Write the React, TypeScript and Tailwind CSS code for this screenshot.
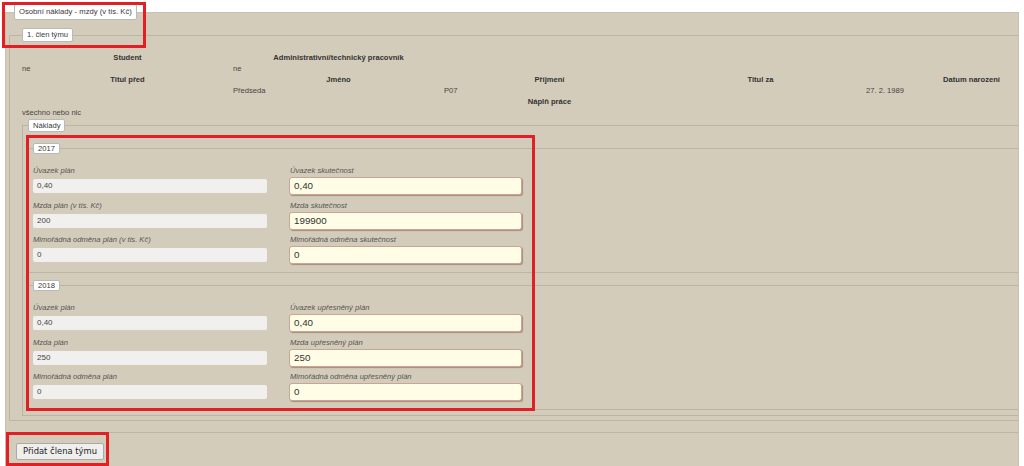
import React from "react";

const SANS = "font-['Liberation_Sans',Arial,sans-serif]";

function Lg({ children, cls = "" }: { children: React.ReactNode; cls?: string }) {
  return (
    <legend
      className={`bg-white border border-[#b9b9b9] rounded-[2px] px-[4px] text-[color:#3a3a3a] ${cls}`}
    >
      {children}
    </legend>
  );
}

type Field = { label: string; value: string };

function LeftInput({ f }: { f: Field }) {
  return (
    <div className="flex flex-col">
      <div className="h-[11px] leading-[10px] text-[7.6px] italic text-[#555]">{f.label}</div>
      <div className="h-[18px] flex items-center">
        <div className="h-[14px] w-full bg-[#f1f0ee] rounded-[2px] pl-[4px] text-[8px] leading-[14px] text-[#444]">
          {f.value}
        </div>
      </div>
    </div>
  );
}

function RightInput({ f }: { f: Field }) {
  return (
    <div className="flex flex-col">
      <div className="h-[11px] leading-[10px] text-[7.6px] italic text-[#555] pl-[1px]">{f.label}</div>
      <div className="h-[18px] w-full bg-[#fffde6] border border-[#c9a497] rounded-[3px] shadow-[1px_1px_1px_rgba(120,60,40,0.45)] pl-[4px] text-[9.8px] leading-[16px] text-[#333]">
        {f.value}
      </div>
    </div>
  );
}

function Year({ year, left, right, cls = "" }: { year: string; left: Field[]; right: Field[]; cls?: string }) {
  return (
    <fieldset className={`min-w-0 border border-r-0 border-[#bdb5a4] pl-[4px] pt-[12px] pb-[8px] ${cls}`}>
      <Lg cls="text-[7.6px] leading-[9px] px-[4px]">{year}</Lg>
      <div className="grid grid-cols-[234px_233px] gap-x-[22px]">
        <div className="flex flex-col gap-y-[5.5px]">
          {left.map((f, i) => (
            <LeftInput key={i} f={f} />
          ))}
        </div>
        <div className="flex flex-col gap-y-[5.5px]">
          {right.map((f, i) => (
            <RightInput key={i} f={f} />
          ))}
        </div>
      </div>
    </fieldset>
  );
}

export default function App() {
  const H = "font-bold text-center text-[#333]";
  const V = "text-[#444]";
  return (
    <div className={`relative w-[1024px] h-[466px] overflow-hidden bg-white ${SANS} text-[7.6px]`}>
      <div className="pl-[5px] pr-[5px] pt-[4px]">
        <fieldset className="min-w-0 bg-[#d4ccba] border border-[#c9c1b0] pl-[3px] pt-[8px] pb-[40px]">
          <Lg cls="ml-[5px] text-[7.7px] leading-[14px]">Osobní náklady - mzdy (v tis. Kč)</Lg>

          <fieldset className="min-w-0 border border-r-0 border-[#bdb5a4] pl-[12px] pt-[10px] pb-[4px]">
            <Lg cls="text-[7.6px] leading-[12px]">1. člen týmu</Lg>
            <div className="grid grid-cols-[211px_211px_211px_211px_211px] auto-rows-[11px] leading-[11px] whitespace-nowrap">
              <div className={H}>Student</div>
              <div className={H}>Administrativní/technický pracovník</div>
              <div />
              <div />
              <div />

              <div className={V}>ne</div>
              <div className={V}>ne</div>
              <div />
              <div />
              <div />

              <div className={H}>Titul před</div>
              <div className={H}>Jméno</div>
              <div className={H}>Příjmení</div>
              <div className={H}>Titul za</div>
              <div className={H}>Datum narození</div>

              <div />
              <div className={V}>Předseda</div>
              <div className={V}>P07</div>
              <div />
              <div className={V}>27. 2. 1989</div>

              <div />
              <div />
              <div className={H}>Náplň práce</div>
              <div />
              <div />

              <div className={V}>všechno nebo nic</div>
              <div />
              <div />
              <div />
              <div />
            </div>

            <fieldset className="min-w-0 mt-[1px] border border-r-0 border-[#bdb5a4] pl-[5px] pt-[11px] pb-[5px]">
              <Lg cls="text-[7.6px] leading-[11px]">Náklady</Lg>
              <Year
                year="2017"
                left={[
                  { label: "Úvazek plán", value: "0,40" },
                  { label: "Mzda plán (v tis. Kč)", value: "200" },
                  { label: "Mimořádná odměna plán (v tis. Kč)", value: "0" },
                ]}
                right={[
                  { label: "Úvazek skutečnost", value: "0,40" },
                  { label: "Mzda skutečnost", value: "199900" },
                  { label: "Mimořádná odměna skutečnost", value: "0" },
                ]}
              />
              <Year
                cls="mt-[7px]"
                year="2018"
                left={[
                  { label: "Úvazek plán", value: "0,40" },
                  { label: "Mzda plán", value: "250" },
                  { label: "Mimořádná odměna plán", value: "0" },
                ]}
                right={[
                  { label: "Úvazek upřesněný plán", value: "0,40" },
                  { label: "Mzda upřesněný plán", value: "250" },
                  { label: "Mimořádná odměna upřesněný plán", value: "0" },
                ]}
              />
            </fieldset>
          </fieldset>

          <div className="mt-[11px] h-px bg-[#bdb5a4]" />

          <button
            type="button"
            className="mt-[10px] ml-[7px] h-[17px] px-[6px] bg-[#efefed] border border-[#a9a9a9] rounded-[2px] font-['DejaVu_Sans',Verdana,sans-serif] text-[8.4px] leading-[15px] text-[#222]"
          >
            Přidat člena týmu
          </button>
        </fieldset>
      </div>

      {/* annotation boxes */}
      <div className="absolute left-[2px] top-[2px] w-[144px] h-[46px] border-[3px] border-[#e31e24] pointer-events-none" />
      <div className="absolute left-[26px] top-[135px] w-[509px] h-[276px] border-[3px] border-[#e31e24] pointer-events-none" />
      <div className="absolute left-[6px] top-[432px] w-[103px] h-[34px] border-[3px] border-[#e31e24] pointer-events-none" />
    </div>
  );
}
